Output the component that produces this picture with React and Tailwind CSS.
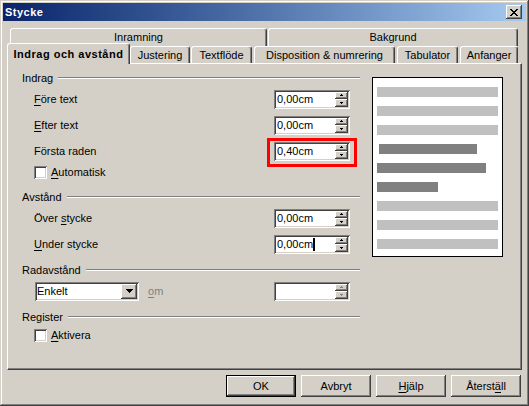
import React from "react";

const raised =
  "shadow-[inset_-1px_-1px_0_#404040,inset_1px_1px_0_#ffffff,inset_-2px_-2px_0_#808080,inset_2px_2px_0_#d4d0c8]";
const sunken =
  "shadow-[inset_1px_1px_0_#808080,inset_-1px_-1px_0_#ffffff,inset_2px_2px_0_#404040,inset_-2px_-2px_0_#d4d0c8]";
const tab =
  "flex items-center justify-center bg-[#d4d0c8] border-t border-l border-r border-t-white border-l-white border-r-[#404040] rounded-t-[3px] shadow-[inset_-1px_0_0_#808080]";

function Arrow({ up, color = "#000000" }) {
  return (
    <svg width="3" height="2" viewBox="0 0 3 2" shapeRendering="crispEdges">
      {up ? (
        <>
          <rect x="1" y="0" width="1" height="1" fill={color} />
          <rect x="0" y="1" width="3" height="1" fill={color} />
        </>
      ) : (
        <>
          <rect x="0" y="0" width="3" height="1" fill={color} />
          <rect x="1" y="1" width="1" height="1" fill={color} />
        </>
      )}
    </svg>
  );
}

function Spin({ value, caret, disabled, highlight }) {
  const c = disabled ? "#808080" : "#000000";
  return (
    <div className={`relative w-[76px] h-[19px] bg-white p-[2px] flex items-center ${sunken}`}>
      <span className="flex-1 pl-[1px] flex items-center">
        {value}
        {caret && <span className="inline-block w-[2px] h-[13px] bg-black" />}
      </span>
      <div className="w-[13px] h-full flex flex-col">
        <div className={`flex-1 flex items-center justify-center bg-[#d4d0c8] ${raised}`}>
          <Arrow up color={c} />
        </div>
        <div className={`flex-1 flex items-center justify-center bg-[#d4d0c8] ${raised}`}>
          <Arrow color={c} />
        </div>
      </div>
      {highlight && (
        <div className="absolute left-[-7px] top-[-4px] right-[-7px] bottom-[-6px] border-[3px] border-[#ff0000]" />
      )}
    </div>
  );
}

function Header({ children, className = "" }) {
  return (
    <div className={`flex items-center h-[16px] ${className}`}>
      <span>{children}</span>
      <div className="flex-1 ml-[5px] h-[2px] border-t border-t-[#808080] border-b border-b-white" />
    </div>
  );
}

function Row({ label, children }) {
  return (
    <div className="flex items-center justify-between h-[26px] pl-[12px] pr-[10px]">
      <span>{label}</span>
      {children}
    </div>
  );
}

function Check({ children, className = "" }) {
  return (
    <div className={`flex items-center h-[16px] pl-[12px] gap-[4px] ${className}`}>
      <div className={`w-[13px] h-[13px] bg-white ${sunken}`} />
      <span>{children}</span>
    </div>
  );
}

function U({ children }) {
  return <span className="underline underline-offset-[2px]">{children}</span>;
}

function Btn({ children, def }) {
  return (
    <div
      className={`w-[70px] h-[22px] flex items-center justify-center bg-[#d4d0c8] ${
        def ? "border border-black" : ""
      } ${raised}`}
    >
      {children}
    </div>
  );
}

function CloseX() {
  const rows = ["##....##", ".##..##.", "..####..", "...##...", "..####..", ".##..##.", "##....##"];
  const rects = [];
  rows.forEach((r, y) =>
    r.split("").forEach((ch, x) => {
      if (ch === "#") rects.push(<rect key={`${x}-${y}`} x={x} y={y} width="1" height="1" fill="#000" />);
    })
  );
  return (
    <svg width="8" height="7" viewBox="0 0 8 7" shapeRendering="crispEdges">
      {rects}
    </svg>
  );
}

export default function App() {
  return (
    <div className="w-[529px] h-[406px] bg-[#d4d0c8] p-[3px] flex flex-col text-[11px] leading-none text-black font-['Liberation_Sans',Arial,sans-serif] shadow-[inset_-1px_-1px_0_#404040,inset_1px_1px_0_#d4d0c8,inset_-2px_-2px_0_#808080,inset_2px_2px_0_#ffffff]">
      {/* Title bar */}
      <div className="h-[18px] flex items-center justify-between bg-linear-to-r from-[#0a246a] to-[#a6caf0] pl-[2px] pr-[4px]">
        <span className="text-white font-bold tracking-[0.5px]">Stycke</span>
        <div className={`w-[16px] h-[14px] flex items-center justify-center bg-[#d4d0c8] ${raised}`}>
          <CloseX />
        </div>
      </div>

      {/* Tabs row 1 */}
      <div className="mt-[7px] flex h-[18px]">
        <div className={`ml-[7px] w-[257px] ${tab}`}>Inramning</div>
        <div className={`ml-[1px] w-[250px] ${tab}`}>Bakgrund</div>
      </div>
      {/* Tabs row 2 */}
      <div className="flex items-end h-[17px]">
        <div className={`ml-[4px] w-[123px] h-[21px] -mb-px relative z-10 font-bold tracking-[0.5px] ${tab}`}>
          Indrag och avstånd
        </div>
        <div className={`w-[60px] h-full ${tab}`}>Justering</div>
        <div className={`ml-[1px] w-[61px] h-full ${tab}`}>Textflöde</div>
        <div className={`ml-[2px] w-[141px] h-full ${tab}`}>Disposition &amp; numrering</div>
        <div className={`ml-[2px] w-[61px] h-full ${tab}`}>Tabulator</div>
        <div className={`ml-[2px] w-[58px] h-full ${tab}`}>Anfanger</div>
      </div>

      {/* Panel */}
      <div className="ml-[4px] w-[515px] h-[307px] bg-[#d4d0c8] border border-t-white border-l-white border-r-[#404040] border-b-[#404040] shadow-[inset_-1px_-1px_0_#808080] flex">
        <div className="ml-[14px] mt-[6px] w-[338px] flex flex-col">
          <Header>Indrag</Header>
          <Row label={<><U>F</U>öre text</>}>
            <Spin value="0,00cm" />
          </Row>
          <Row label={<><U>E</U>fter text</>}>
            <Spin value="0,00cm" />
          </Row>
          <Row label="Första raden">
            <Spin value="0,40cm" highlight />
          </Row>
          <Check>
            <U>A</U>utomatisk
          </Check>

          <Header className="mt-[9px]">Avstånd</Header>
          <Row label={<>Över <U>s</U>tycke</>}>
            <Spin value="0,00cm" />
          </Row>
          <Row label={<><U>U</U>nder stycke</>}>
            <Spin value="0,00cm" caret />
          </Row>

          <Header className="mt-[5px]">Radavstånd</Header>
          <div className="flex items-center h-[26px] pl-[13px] pr-[10px]">
            <div className={`w-[104px] h-[19px] bg-white p-[2px] flex items-center ${sunken}`}>
              <span className="flex-1">Enkelt</span>
              <div className={`w-[16px] h-full flex items-center justify-center bg-[#d4d0c8] ${raised}`}>
                <svg width="7" height="4" viewBox="0 0 7 4" shapeRendering="crispEdges">
                  <rect x="0" y="0" width="7" height="1" fill="#000" />
                  <rect x="1" y="1" width="5" height="1" fill="#000" />
                  <rect x="2" y="2" width="3" height="1" fill="#000" />
                  <rect x="3" y="3" width="1" height="1" fill="#000" />
                </svg>
              </div>
            </div>
            <span className="ml-[9px] text-[#808080]">
              <U>o</U>m
            </span>
            <div className="flex-1" />
            <Spin value="" disabled />
          </div>

          <Header className="mt-[5px]">Register</Header>
          <Check className="mt-[2px]">
            <U>A</U>ktivera
          </Check>
        </div>

        {/* Preview */}
        <div className="ml-[12px] mt-[13px] w-[131px] h-[180px] border border-black bg-white pt-[9px] pl-[4px] flex flex-col gap-[9px]">
          <div className="h-[10px] w-[121px] bg-[#c0c0c0]" />
          <div className="h-[10px] w-[121px] bg-[#c0c0c0]" />
          <div className="h-[10px] w-[121px] bg-[#c0c0c0]" />
          <div className="h-[10px] w-[98px] ml-[2px] bg-[#808080]" />
          <div className="h-[10px] w-[109px] bg-[#808080]" />
          <div className="h-[10px] w-[61px] bg-[#808080]" />
          <div className="h-[10px] w-[121px] bg-[#c0c0c0]" />
          <div className="h-[10px] w-[121px] bg-[#c0c0c0]" />
          <div className="h-[10px] w-[121px] bg-[#c0c0c0]" />
        </div>
      </div>

      {/* Buttons */}
      <div className="mt-[5px] flex justify-end gap-[5px] pr-[5px]">
        <Btn def>OK</Btn>
        <Btn>Avbryt</Btn>
        <Btn>
          <U>H</U>jälp
        </Btn>
        <Btn>
          Återst<U>ä</U>ll
        </Btn>
      </div>
    </div>
  );
}
